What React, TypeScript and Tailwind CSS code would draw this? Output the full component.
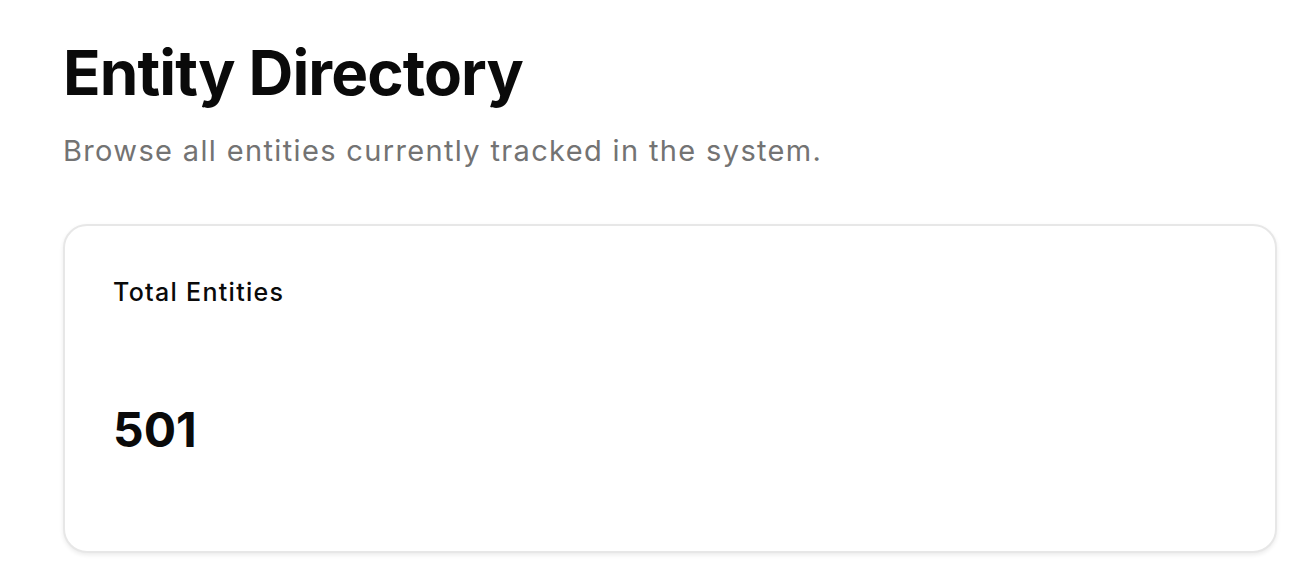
import React from 'react';

type StatCardProps = { label: string; value: string };

function StatCard({ label, value }: StatCardProps) {
  return (
    <div className="flex flex-col rounded-[24px] border-2 border-[#e7e7e7] bg-white px-[48px] pb-[97px] pt-[54px] shadow-[0_2px_4px_rgba(0,0,0,0.08)]">
      <p className="text-[25px] font-medium leading-none tracking-[1.3px] text-[#0a0a0a]">{label}</p>
      <p className="mt-[101px] text-[48px] font-bold leading-none text-[#0a0a0a]">{value}</p>
    </div>
  );
}

export default function App() {
  return (
    <div className="min-h-screen bg-white pl-[63px] pr-[23px] pt-[42px] font-['Inter',sans-serif]">
      <h1 className="text-[62px] font-bold leading-none tracking-[-0.9px] text-[#0a0a0a]">Entity Directory</h1>
      <p className="mt-[32px] text-[29px] leading-none tracking-[1.35px] text-[#737373]">
        Browse all entities currently tracked in the system.
      </p>
      <div className="mt-[59px]">
        <StatCard label="Total Entities" value="501" />
      </div>
    </div>
  );
}
